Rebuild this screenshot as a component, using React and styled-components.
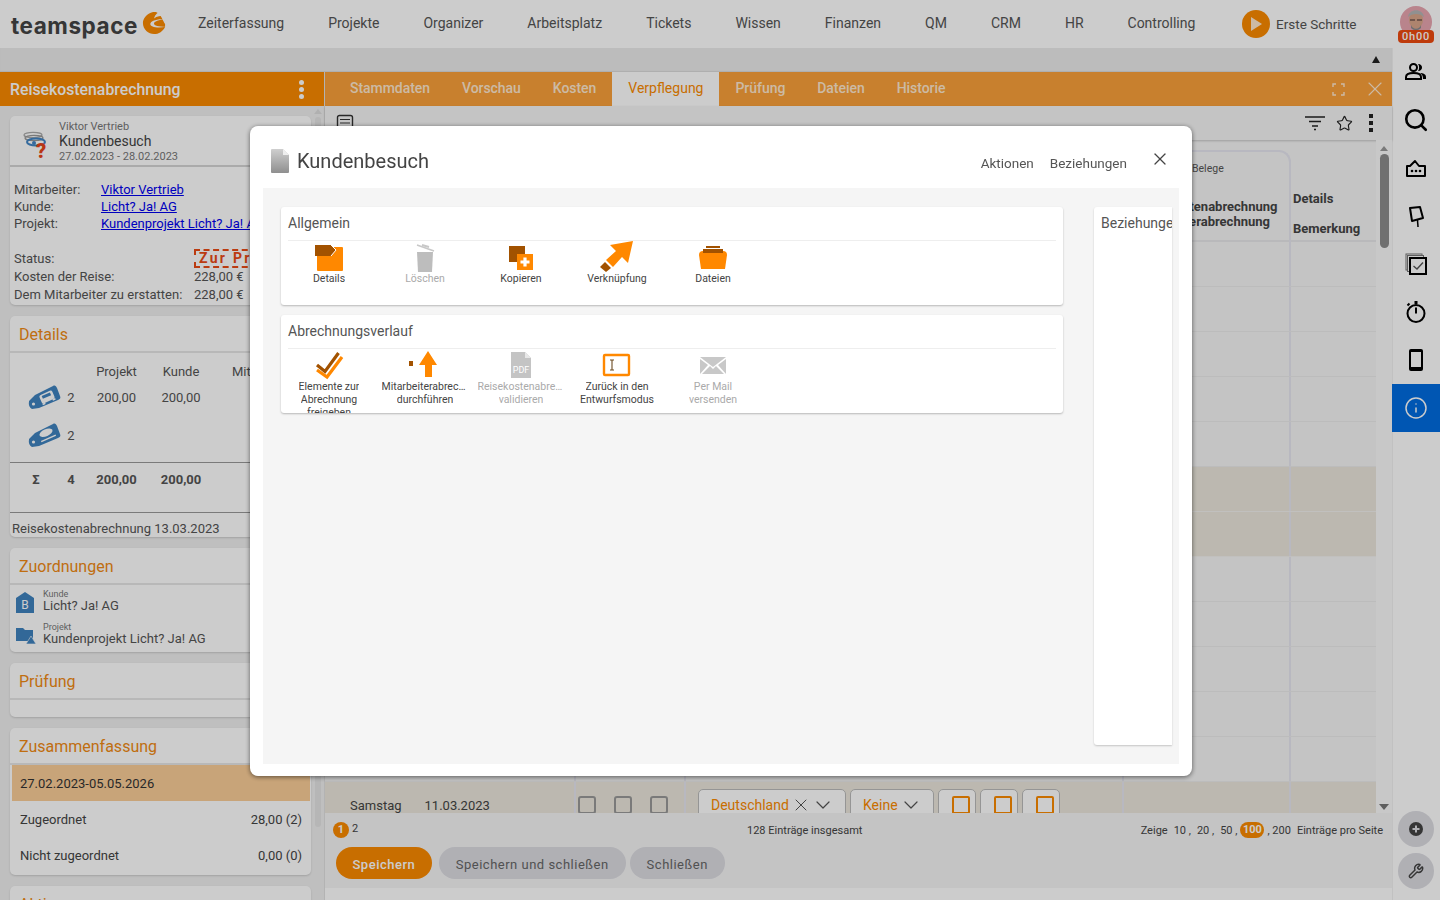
import React from "react";
import styled, { createGlobalStyle } from "styled-components";
import { Search, Star, Info, Wrench, X, ChevronDown } from "lucide-react";

const Global = createGlobalStyle`
  html, body { margin: 0; padding: 0; height: 900px; overflow: hidden; background: #fff; }
  * { box-sizing: border-box; }
  body { font-family: Roboto, "Liberation Sans", sans-serif; color: #444; }
  a { color: #0000ee; }
`;

const Page = styled.div`
  width: 1440px; height: 900px; display: flex; flex-direction: column; overflow: hidden;
`;
const Overlay = styled.div`
  position: fixed; inset: 0; background: rgba(0,0,0,.2);
`;

/* top bar */
const TopBar = styled.header`
  height: 48px; flex: none; display: flex; align-items: center; background: #fff;
`;
const Logo = styled.div`
  width: 176px; padding-left: 11px; display: flex; align-items: flex-start; flex: none; height: 48px;
  svg { margin: 11px 0 0 4px; }
`;
const LogoText = styled.span`
  font-family: Inter, sans-serif; font-weight: 700; font-size: 22.5px; letter-spacing: .55px; color: #444; margin-top: 12px; line-height: 27px;
`;
const Nav = styled.nav`
  display: flex; flex: none; width: 1034px;
`;
const NavItem = styled.span`
  font-size: 14px; line-height: 20px; padding: 0 22px; color: #555; margin-top: -2px;
`;
const FirstSteps = styled.div`
  display: flex; align-items: center; gap: 6px; width: 152px; padding-left: 32px; flex: none; font-size: 13.5px; color: #555; white-space: nowrap; margin-top: -1px;
`;
const Play = styled.span`
  width: 28px; height: 28px; flex: none; border-radius: 50%; background: #fb8a00; display: flex; align-items: center; justify-content: center;
`;
const AvatarWrap = styled.div`
  position: relative; width: 36px; height: 42px; margin-left: 36px; margin-top: 6px; flex: none;
  svg { display: block; margin-left: 2px; }
`;
const TimeBadge = styled.span`
  position: absolute; left: 0; top: 24px; width: 36px; height: 13px; border-radius: 4px; background: #ee4a10; color: #fff;
  font-size: 11px; line-height: 13px; font-weight: 500; text-align: center; letter-spacing: .8px;
`;

const Body = styled.div`
  flex: 1; display: flex; min-height: 0;
`;
const Content = styled.div`
  width: 1392px; flex: none; display: flex; flex-direction: column; min-height: 0;
`;
const Strip = styled.div`
  height: 24px; flex: none; background: #ececec; display: flex; justify-content: flex-end; align-items: center; padding: 0 12px 2px 0;
  box-shadow: inset 0 -1px 1px rgba(0,0,0,.08);
`;
const Panels = styled.div`
  flex: 1; display: flex; min-height: 0;
`;

/* left */
const Left = styled.aside`
  width: 325px; flex: none; display: flex; flex-direction: column; background: #efefef; min-height: 0;
  border-right: 1px solid #e0e0e0;
`;
const LeftHead = styled.div`
  height: 34px; flex: none; background: #fb8a00; color: #fff; display: flex; justify-content: space-between; align-items: center;
  padding: 0 20px 0 10px; font-size: 15.8px; font-weight: 500;
`;
const Dots = styled.span`
  display: flex; flex-direction: column; gap: ${p => p.$gap || 2}px; margin-left: ${p => p.$ml || 0}px;
  i { display: block; width: ${p => p.$s || 5}px; height: ${p => p.$s || 5}px; border-radius: ${p => p.$square ? 0 : "50%"}; background: ${p => p.$c || "#fff"}; }
`;
const LeftBody = styled.div`
  flex: 1; display: flex; min-height: 0; overflow: hidden;
`;
const CardCol = styled.div`
  width: 311px; flex: none; padding: 0 0 0 10px;
`;
const LeftScroll = styled.div`
  width: 13px; flex: none; display: flex; flex-direction: column; align-items: center; padding-top: 3px;
`;
const ArrowUp = styled.span`
  width: 0; height: 0; border-left: ${p => p.$w || 4}px solid transparent; border-right: ${p => p.$w || 4}px solid transparent; border-bottom: ${p => p.$h || 5}px solid ${p => p.$c || "#ddd"};
`;
const LeftThumb = styled.span`
  width: 6px; height: 710px; margin-top: 3px; border-radius: 3px; background: #e4e4e4;
`;
const Card = styled.section`
  height: ${p => p.$h}px; margin-top: ${p => p.$mt}px; background: #fff; border-radius: 5px; overflow: hidden;
  box-shadow: 0 1px 2px rgba(0,0,0,.15);
`;
const CardTitle = styled.h3`
  margin: 0; height: 37px; padding: 1px 0 0 9px; font-weight: 400; font-size: 16px; line-height: 36px; color: #f08a14; border-bottom: 2px solid #e6e6e6;
`;
const InfoHead = styled.div`
  height: 51px; display: flex; border-bottom: 2px solid #d5d5d5; padding: 4px 0 0 13px;
`;
const InfoIcon = styled.div`
  width: 36px; padding-top: 13px; flex: none;
  svg { display: block; overflow: visible; }
`;
const InfoText = styled.div`
  display: flex; flex-direction: column;
`;
const SmallGrey = styled.span`
  font-size: 11px; line-height: 13px; color: #777;
`;
const InfoName = styled.span`
  font-size: 14px; line-height: 17px; color: #444;
`;
const InfoRows = styled.div`
  padding: 14px 0 0 4px; font-size: 13px; color: #555;
`;
const InfoRow = styled.div`
  display: grid; grid-template-columns: ${p => p.$wide ? "180px" : "87px"} 1fr; line-height: 17px; white-space: nowrap; margin-top: ${p => p.$mt || 0}px;
  height: ${p => p.$h || 17.2}px; align-items: center;
`;
const StatusBox = styled.span`
  display: inline-block; height: 19px; padding: 0 3px; border: 2px dashed #ea4a14; color: #ea4a14; font-weight: 700; font-size: 14px; line-height: 15px; letter-spacing: 2.3px;
`;
const Sum = styled.div`
  font-size: 13px; color: #555; padding: 5px 0 0;
`;
const SumRow = styled.div`
  display: grid; grid-template-columns: 52px 18px 73px 56px 90px; height: ${p => p.$h}px; align-items: ${p => p.$top ? "start" : "center"}; text-align: center; white-space: nowrap;
  font-weight: ${p => p.$bold ? 700 : 400};
  border-top: ${p => p.$line ? "1px solid #999" : "0"};
  padding-top: ${p => p.$top || 0}px;
  margin-bottom: ${p => p.$mb || 0}px;
`;
const TagCell = styled.span`
  display: flex; justify-content: flex-end; align-items: center; margin-right: 1px;
`;
const MitHead = styled.span`
  text-align: left; padding-left: 23px;
`;
const Date13 = styled.div`
  border-top: 1px solid #999; font-size: 13px; padding: 8px 0 0 2px; color: #555; white-space: nowrap;
`;
const RelRow = styled.div`
  display: flex; height: 33px; padding: 4px 0 0 6px; gap: 8px;
`;
const RelIcon = styled.div`
  width: 19px; flex: none; padding-top: 3px;
`;
const RelText = styled.div`
  display: flex; flex-direction: column;
`;
const RelLabel = styled.span`
  font-size: 9px; line-height: 10px; color: #777;
`;
const RelValue = styled.span`
  font-size: 13px; line-height: 13px; color: #555;
`;
const SumHead = styled.div`
  height: 36px; margin: 0 1px 0 2px; padding-left: 8px; background: #fbce98; display: flex; align-items: center; font-size: 13px; color: #333;
`;
const KV = styled.div`
  height: 36px; display: flex; justify-content: space-between; align-items: center; padding: 0 9px 0 10px; font-size: 13px; color: #444;
`;

/* main */
const Main = styled.main`
  flex: 1; display: flex; flex-direction: column; min-width: 0; background: #f5f5f5;
`;
const Tabs = styled.div`
  height: 34px; flex: none; background: #faa03a; display: flex; align-items: stretch; padding-left: 9px; position: relative; color: #fff;
`;
const Tab = styled.span`
  padding: 0 16px; font-size: 14px; font-weight: ${p => p.$on ? 400 : 500}; line-height: 33px; letter-spacing: ${p => p.$on ? 0 : "-.05px"}; background: ${p => p.$on ? "#fff" : "transparent"}; color: ${p => p.$on ? "#fb8a00" : "#ffe9cf"};
`;
const TabTools = styled.div`
  margin-left: auto; display: flex; align-items: center; gap: 18px; padding-right: 5px;
`;
const Tool = styled.div`
  height: 34px; flex: none; display: flex; align-items: center; justify-content: space-between; padding: 0 19px 0 11px; background: #f5f5f5;
  box-shadow: 0 1px 2px rgba(0,0,0,.2); position: relative;
`;
const ToolRight = styled.div`
  display: flex; align-items: center;
  svg + svg { margin-left: 10px; }
`;
const Grid = styled.div`
  flex: 1; display: flex; min-height: 0;
`;
const TableArea = styled.div`
  width: 1051px; flex: none; overflow: hidden;
`;
const cols = "251px 110px 438px 167px 85px";
const HeadRow = styled.div`
  height: 102px; display: grid; grid-template-columns: ${cols}; border-bottom: 2px solid #e8e8ea;
`;
const BelegeCell = styled.div`
  margin-top: 10px; border-top: 2px solid #e6e6f0; border-right: 2px solid #e6e6f0; border-top-right-radius: 12px; padding: 10px 0 0 68px; font-size: 10.5px; color: #555; white-space: nowrap; overflow: hidden; height: 92px;
`;
const BoldLines = styled.div`
  margin: 24px 0 0 -56px; font-size: 13px; font-weight: 700; line-height: 15px; color: #444;
`;
const DetailCell = styled.div`
  padding: 51px 0 0 2px; font-size: 13px; font-weight: 700; color: #444; line-height: 16px;
`;
const Bem = styled.div`
  margin-top: 14px;
`;
const Row = styled.div`
  height: 45px; display: grid; grid-template-columns: ${cols}; background: ${p => p.$hl ? "#ebe7dc" : "#f5f5f5"}; border-bottom: 1px solid ${p => p.$hl ? "#f2f1ee" : "#ebebeb"};
`;
const Cell = styled.div`
  border-right: ${p => p.$last ? 0 : "2px solid #e6e6f0"}; display: flex; align-items: ${p => p.$top ? "flex-start" : "center"}; font-size: 13px; color: #444; gap: ${p => p.$gap || 0}px; padding: ${p => p.$pt || 0}px 0 0 ${p => p.$pl || 0}px; white-space: nowrap;
`;
const Check = styled.span`
  width: 18px; height: 18px; flex: none; border: 2px solid #999; border-radius: 3px; margin-top: 2px;
`;
const Combo = styled.div`
  height: 36px; flex: none; width: ${p => p.$w}px; margin: 7px 0 0 4px; background: #fff; border: 1px solid #bbb; border-radius: 5px 5px 0 0; display: flex; align-items: center; padding: 0 10px 4px 12px; color: #fb8a00; font-size: 14px;
  > span { margin-right: auto; }
`;
const SquareBtn = styled.div`
  width: 38px; height: 36px; flex: none; margin: 7px 0 0 4px; background: #fff; border: 1px solid #bbb; border-radius: 5px 5px 0 0; padding: 6px 0 0 13px;
  i { display: block; width: 18px; height: 18px; border: 2px solid #fb8a00; border-radius: 2px; }
`;
const VScroll = styled.div`
  width: 16px; flex: none; background: #fafafa; display: flex; flex-direction: column; align-items: center; padding-top: 6px; position: relative;
`;
const VThumb = styled.span`
  width: 9px; height: 94px; margin-top: 3px; background: #8c8c8c; border-radius: 5px;
`;
const ArrowDown = styled.span`
  margin-top: auto; margin-bottom: 3px; width: 0; height: 0; border-left: 5px solid transparent; border-right: 5px solid transparent; border-top: 6px solid #777;
`;
const Footer = styled.div`
  height: 75px; flex: none; background: #f5f5f5; position: relative; padding: 9px 9px 0 8px; display: flex; flex-direction: column; gap: 9px;
`;
const PagerRow = styled.div`
  height: 16px; display: grid; grid-template-columns: 414px 115px 1fr; align-items: center; font-size: 11px; color: #444;
`;
const PageNums = styled.div`
  display: flex; gap: 3px; align-items: flex-start; font-size: 11px;
`;
const Bubble = styled.span`
  min-width: ${p => p.$w || 16}px; height: 16px; margin: 0 ${p => p.$mx || 0}px; border-radius: 8px; background: #fb8a00; color: #fff; font-size: 11px; line-height: 16px; font-weight: 700; text-align: center; display: inline-block;
`;
const Center = styled.div`
  text-align: center; white-space: nowrap; margin-top: 1px;
`;
const PerPage = styled.div`
  display: flex; justify-content: flex-end; gap: 6px; align-items: center; white-space: nowrap;
`;
const Btns = styled.div`
  display: flex; padding-left: 3px;
`;
const Btn = styled.button`
  height: 32px; border: 0; border-radius: 16px; padding: 2px ${p => p.$primary ? 16.5 : 17}px 0; margin-left: ${p => p.$ml || 0}px; font: ${p => p.$primary ? 500 : 400} 13px Roboto, sans-serif; letter-spacing: .5px;
  background: ${p => p.$primary ? "#fb8a00" : "#dcdce2"}; color: ${p => p.$primary ? "#fff" : "#666"};
`;
const BottomGap = styled.div`
  height: 12px; flex: none; background: #fff;
`;

/* right */
const Side = styled.aside`
  width: 48px; flex: none; background: #fff; display: flex; flex-direction: column; box-shadow: inset 1px 0 0 #f2f2f2;
`;
const SideBtn = styled.div`
  height: 48px; flex: none; display: flex; align-items: center; justify-content: center; background: ${p => p.$on ? "#006ce0" : "transparent"}; color: #000;
`;
const CircleBtns = styled.div`
  margin-top: auto; display: flex; flex-direction: column; gap: 6px; align-items: center; padding-bottom: 11px;
`;
const CircleBtn = styled.div`
  width: 36px; height: 36px; border-radius: 50%; background: #dcdce2; display: flex; align-items: center; justify-content: center; color: #444;
`;

/* modal */
const Modal = styled.div`
  position: fixed; left: 250px; top: 126px; width: 942px; height: 650px; background: #fff; border-radius: 8px; box-shadow: 0 1px 5px rgba(0,0,0,.55);
  display: flex; flex-direction: column;
`;
const ModalHead = styled.div`
  height: 62px; flex: none; display: flex; align-items: flex-start; padding: 23px 0 0 21px; position: relative;
`;
const ModalTitle = styled.h2`
  margin: 0 0 0 7px; font-weight: 400; font-size: 20px; line-height: 24px; color: #444;
`;
const ModalLinks = styled.div`
  margin-left: auto; display: flex; gap: 16px; font-size: 13.5px; color: #555; padding-top: 6px; margin-right: 65px; line-height: 17px;
`;
const CloseBtn = styled.span`
  position: absolute; right: 22px; top: 23px; color: #444; display: flex;
`;
const ModalBody = styled.div`
  flex: 1; margin: 0 13px 12px; background: #f5f5f5; display: flex; padding: 19px 0 0 18px; min-height: 0;
`;
const Cards = styled.div`
  width: 782px; flex: none; display: flex; flex-direction: column; gap: 10px;
`;
const MCard = styled.div`
  height: 98px; background: #fff; border-radius: 3px; box-shadow: 0 1px 2px rgba(0,0,0,.25); overflow: hidden; padding: 0;
`;
const MTitle = styled.div`
  margin: 0 7px; height: 34px; border-bottom: 1px solid #eee; font-size: 14px; line-height: 32px; color: #555;
`;
const Items = styled.div`
  display: flex;
`;
const Item = styled.div`
  width: 96px; flex: none; display: flex; flex-direction: column; align-items: center; font-size: 10.5px; line-height: 13px; color: ${p => p.$off ? "#aaa" : "#444"}; text-align: center;
  svg { display: block; height: 31px; }
`;
const ItemLine = styled.span`
  max-width: 87px; white-space: nowrap; overflow: hidden; text-overflow: ellipsis; display: block;
`;
const RelCard = styled.div`
  width: 78px; height: 538px; flex: none; margin-left: 31px; background: #fff; box-shadow: 0 1px 2px rgba(0,0,0,.2); overflow: hidden; border-radius: 3px 0 0 3px;
  font-size: 14px; line-height: 32px; color: #555; white-space: nowrap; padding-left: 7px;
`;

const Dot3 = () => <Dots><i /><i /><i /></Dots>;

const Tag = ({ kind }) => (
  <svg width="33" height="25" viewBox="0 0 33 25">
    <path d="M1 16 L7 10 L25 1 C27 0 28 1 29 3 L32 11 C33 13 32 14 30 15 L11 23 L4 24 Q0 22 1 16Z" fill="#3f83bf" />
    <circle cx="5.5" cy="19" r="1.6" fill="#fff" />
    {kind === "car" ? (
      <g transform="rotate(-24 19 12)">
        <rect x="12" y="7.5" width="14" height="9" rx="2" fill="#fff" />
        <rect x="14.5" y="9" width="9" height="3" fill="#3f83bf" />
        <path d="M12 17 h3 M23 17 h3" stroke="#fff" strokeWidth="1.6" />
      </g>
    ) : (
      <g transform="rotate(-24 19 12)">
        <ellipse cx="19" cy="9.5" rx="7" ry="3.5" fill="#fff" />
        <rect x="11" y="15" width="16" height="1.4" fill="#fff" />
      </g>
    )}
  </svg>
);

const catalog = [
  { label: ["Details"], icon: (
    <svg width="40" height="31" viewBox="0 0 40 31"><rect x="8" y="6" width="26" height="24" rx="1" fill="#ff8800" /><path d="M6 4 H22 L27 9 L22 15 H6Z" fill="#a25200" /><path d="M22 4 L27 9 L22 15" fill="none" stroke="#fff" strokeWidth="1" /></svg>
  )},
  { label: ["Löschen"], off: true, icon: (
    <svg width="40" height="31" viewBox="0 0 40 31"><path d="M12 11 H28 L27 31 H13Z" fill="#bdbdbd" /><path d="M12 4 L29 10" stroke="#c8c8c8" strokeWidth="1.6" /><path d="M17 4 L24 6" stroke="#c8c8c8" strokeWidth="2" /></svg>
  )},
  { label: ["Kopieren"], icon: (
    <svg width="40" height="31" viewBox="0 0 40 31"><rect x="8" y="5" width="16" height="16" fill="#a25200" /><rect x="16" y="13" width="16" height="16" fill="#ff8800" /><path d="M19.5 21 h9 M24 16.5 v9" stroke="#fff" strokeWidth="3.2" /></svg>
  )},
  { label: ["Verknüpfung"], icon: (
    <svg width="40" height="31" viewBox="0 0 40 31"><path d="M36 0 L13 4 L19 10 L9 19 L16 26 L25 16 L31 22Z" fill="#ff8800" /><path d="M8 21 L14 27 L9 31 L3 26Z" fill="#a25200" /></svg>
  )},
  { label: ["Dateien"], icon: (
    <svg width="40" height="31" viewBox="0 0 40 31"><path d="M6 14 Q6 10 10 10 H30 Q34 10 34 14 L32 28 H8Z" fill="#ff8800" /><rect x="10" y="8" width="20" height="4" fill="#a25200" /><rect x="13" y="5" width="14" height="2" fill="#a25200" /></svg>
  )},
];
const flow = [
  { label: ["Elemente zur", "Abrechnung", "freigeben"], icon: (
    <svg width="40" height="31" viewBox="0 0 40 31"><path d="M8 21 L18 28 L33 8" fill="none" stroke="#ff8800" strokeWidth="3.2" /><path d="M8 16 L16 22.5 L29.5 4" fill="none" stroke="#a25200" strokeWidth="3.2" /></svg>
  )},
  { label: ["Mitarbeiterabrechnung", "durchführen"], icon: (
    <svg width="40" height="31" viewBox="0 0 40 31"><rect x="4" y="12" width="4" height="5" fill="#a25200" /><path d="M23 2 L32 16 L27 16 L27 28 L20 28 L20 16 L14 16Z" fill="#ff8800" /></svg>
  )},
  { label: ["Reisekostenabrechnung", "validieren"], off: true, icon: (
    <svg width="40" height="31" viewBox="0 0 40 31"><path d="M10 3 H24 L30 9 V29 H10Z" fill="#c4c4c4" /><path d="M24 3 L30 9 H24Z" fill="#e8e8e8" /><text x="20" y="24" textAnchor="middle" fontSize="9" fill="#fff" fontFamily="Roboto">PDF</text></svg>
  )},
  { label: ["Zurück in den", "Entwurfsmodus"], icon: (
    <svg width="40" height="31" viewBox="0 0 40 31"><rect x="7" y="6" width="25" height="20" rx="1" fill="#fff" stroke="#ff8800" strokeWidth="2.4" /><path d="M13 11 h4 M13 21 h4 M15 11 v10" stroke="#6b4a20" strokeWidth="1.1" fill="none" /></svg>
  )},
  { label: ["Per Mail", "versenden"], off: true, icon: (
    <svg width="40" height="31" viewBox="0 0 40 31"><path d="M7 8 H33 L20 18Z" fill="#c8c8c8" /><path d="M7 10 L15 16 L7 25Z M33 10 L25 16 L33 25Z M9 25 L17 17 L20 20 L23 17 L31 25Z" fill="#c8c8c8" /></svg>
  )},
];

const Actions = ({ list }) => (
  <Items>
    {list.map((it, i) => (
      <Item key={i} $off={it.off}>
        {it.icon}
        {it.label.map(l => <ItemLine key={l}>{l}</ItemLine>)}
      </Item>
    ))}
  </Items>
);

const rows = Array.from({ length: 13 }, (_, i) => i);

export default function App() {
  return (
    <Page>
      <Global />
      <TopBar>
        <Logo>
          <LogoText>teamspace</LogoText>
          <svg width="24" height="24" viewBox="0 0 26 26">
            <path d="M12 1 C5 3 1 8 1 13 C1 20 7 25 13 25 C18 25 23 22 25 17 L25 14 C23 12 21 3 15 1Z" fill="#fb8a00" />
            <path d="M26 9 C15 8 9 11 9 14 C9 17 16 19 26 17 C18 17 13 16 13 13.5 C13 11.5 18 9.5 26 9Z" fill="#fff" />
            <path d="M21 0 C17 1 14 4 13 8 C16 6 20 5 26 5 L26 0Z" fill="#fff" />
          </svg>
        </Logo>
        <Nav>
          {["Zeiterfassung", "Projekte", "Organizer", "Arbeitsplatz", "Tickets", "Wissen", "Finanzen", "QM", "CRM", "HR", "Controlling"].map(n => <NavItem key={n}>{n}</NavItem>)}
        </Nav>
        <FirstSteps>
          <Play><svg width="14" height="16" viewBox="0 0 14 16"><path d="M2 1 L13 8 L2 15Z" fill="#ffe9cf" /></svg></Play>
          Erste Schritte
        </FirstSteps>
        <AvatarWrap>
          <svg width="32" height="32" viewBox="0 0 32 32">
            <clipPath id="av"><circle cx="16" cy="16" r="16" /></clipPath>
            <g clipPath="url(#av)">
              <rect width="32" height="32" fill="#e8a5b0" />
              <path d="M0 32 L10 25 H22 L32 32Z" fill="#f03a30" />
              <ellipse cx="16" cy="14" rx="7" ry="9" fill="#d9a58a" />
              <path d="M8 11 C9 2 23 2 24 11 C20 7 12 7 8 11Z" fill="#b5b5b5" />
              <path d="M10 14 h5 M17 14 h5" stroke="#433" strokeWidth="1.2" />
              <path d="M11 19 C13 24 19 24 21 19 L21 22 C18 25 14 25 11 22Z" fill="#8b8b8b" />
            </g>
          </svg>
          <TimeBadge>0h00</TimeBadge>
        </AvatarWrap>
      </TopBar>
      <Body>
        <Content>
          <Strip><ArrowUp $c="#222" $h={7} /></Strip>
          <Panels>
            <Left>
              <LeftHead>Reisekostenabrechnung<Dot3 /></LeftHead>
              <LeftBody>
                <CardCol>
                  <Card $h={189} $mt={10}>
                    <InfoHead>
                      <InfoIcon>
                        <svg width="26" height="26" viewBox="0 0 26 26">
                          <ellipse cx="10" cy="2" rx="9" ry="2.6" fill="none" stroke="#aaa" strokeWidth="1.3" />
                          <ellipse cx="11" cy="5" rx="9" ry="2.6" fill="none" stroke="#999" strokeWidth="1.3" />
                          <ellipse cx="13" cy="9" rx="9" ry="3.5" fill="none" stroke="#4285c5" strokeWidth="2" />
                          <circle cx="11" cy="10" r="2" fill="#4285c5" />
                          <text x="13" y="25" fontSize="20" fontWeight="900" fill="#e8441a" fontFamily="Roboto">?</text>
                        </svg>
                      </InfoIcon>
                      <InfoText>
                        <SmallGrey>Viktor Vertrieb</SmallGrey>
                        <InfoName>Kundenbesuch</InfoName>
                        <SmallGrey>27.02.2023 - 28.02.2023</SmallGrey>
                      </InfoText>
                    </InfoHead>
                    <InfoRows>
                      <InfoRow><span>Mitarbeiter:</span><a href="#a">Viktor Vertrieb</a></InfoRow>
                      <InfoRow><span>Kunde:</span><a href="#b">Licht? Ja! AG</a></InfoRow>
                      <InfoRow><span>Projekt:</span><a href="#c">Kundenprojekt Licht? Ja! AG</a></InfoRow>
                      <InfoRow $wide $mt={16} $h={19}><span>Status:</span><span><StatusBox>Zur Prüfung</StatusBox></span></InfoRow>
                      <InfoRow $wide $h={18}><span>Kosten der Reise:</span><span>228,00 €</span></InfoRow>
                      <InfoRow $wide $h={16}><span>Dem Mitarbeiter zu erstatten:</span><span>228,00 €</span></InfoRow>
                    </InfoRows>
                  </Card>
                  <Card $h={221} $mt={11}>
                    <CardTitle>Details</CardTitle>
                    <Sum>
                      <SumRow $h={26}><span /><span /><span>Projekt</span><span>Kunde</span><MitHead>Mitarbeiter</MitHead></SumRow>
                      <SumRow $h={27}><TagCell><Tag kind="car" /></TagCell><span>2</span><span>200,00</span><span>200,00</span><span /></SumRow>
                      <SumRow $h={48} $mb={3}><TagCell><Tag kind="food" /></TagCell><span>2</span><span /><span /><span /></SumRow>
                      <SumRow $h={50} $line $bold $top={9}><span>Σ</span><span>4</span><span>200,00</span><span>200,00</span><span /></SumRow>
                      <Date13>Reisekostenabrechnung 13.03.2023</Date13>
                    </Sum>
                  </Card>
                  <Card $h={104} $mt={11}>
                    <CardTitle>Zuordnungen</CardTitle>
                    <RelRow>
                      <RelIcon><svg width="18" height="21" viewBox="0 0 18 21"><path d="M0 6 L9 0 L18 6 V21 H0Z" fill="#3f83bf" /><text x="9" y="16.5" textAnchor="middle" fontSize="12" fill="#fff" fontFamily="Roboto">B</text></svg></RelIcon>
                      <RelText><RelLabel>Kunde</RelLabel><RelValue>Licht? Ja! AG</RelValue></RelText>
                    </RelRow>
                    <RelRow>
                      <RelIcon><svg width="20" height="20" viewBox="0 0 20 20"><path d="M0 3 H7 L9 5 H17 V16 H0Z" fill="#3f83bf" /><path d="M15 11 L20 19 H10Z" fill="#3f83bf" stroke="#fff" strokeWidth=".6" /></svg></RelIcon>
                      <RelText><RelLabel>Projekt</RelLabel><RelValue>Kundenprojekt Licht? Ja! AG</RelValue></RelText>
                    </RelRow>
                  </Card>
                  <Card $h={54} $mt={11}><CardTitle>Prüfung</CardTitle></Card>
                  <Card $h={147} $mt={11}>
                    <CardTitle>Zusammenfassung</CardTitle>
                    <SumHead>27.02.2023-05.05.2026</SumHead>
                    <KV><span>Zugeordnet</span><span>28,00 (2)</span></KV>
                    <KV><span>Nicht zugeordnet</span><span>0,00 (0)</span></KV>
                  </Card>
                  <Card $h={60} $mt={11}><CardTitle>Aktionen</CardTitle></Card>
                </CardCol>
                <LeftScroll><ArrowUp /><LeftThumb /></LeftScroll>
              </LeftBody>
            </Left>
            <Main>
              <Tabs>
                {["Stammdaten", "Vorschau", "Kosten"].map(t => <Tab key={t}>{t}</Tab>)}
                <Tab $on>Verpflegung</Tab>
                {["Prüfung", "Dateien", "Historie"].map(t => <Tab key={t}>{t}</Tab>)}
                <TabTools>
                  <svg width="13" height="13" viewBox="0 0 13 13"><path d="M1 4 V1 H4 M9 1 H12 V4 M12 9 V12 H9 M4 12 H1 V9" fill="none" stroke="#ffe9cf" strokeWidth="1.4" /></svg>
                  <X size={24} color="#ffe9cf" strokeWidth={1.1} />
                </TabTools>
              </Tabs>
              <Tool>
                <svg width="18" height="18" viewBox="0 0 18 18"><rect x="1.5" y="1.5" width="15" height="15" rx="2" fill="none" stroke="#333" strokeWidth="1.4" /><path d="M4 5.5 h10 M4 9 h10 M4 12.5 h10" stroke="#333" strokeWidth="1.2" /></svg>
                <ToolRight>
                  <svg width="22" height="16" viewBox="0 0 22 16"><path d="M1 2 h20 M5 6.5 h12 M8 11 h6 M10 14.5 h2" stroke="#222" strokeWidth="1.6" /></svg>
                  <Star size={17} color="#222" strokeWidth={1.6} />
                  <Dots $square $s={4} $c="#222" $gap={3} $ml={16}><i /><i /><i /></Dots>
                </ToolRight>
              </Tool>
              <Grid>
                <TableArea>
                  <HeadRow>
                    <Cell />
                    <Cell />
                    <Cell />
                    <BelegeCell>
                      Belege
                      <BoldLines>Reisekostenabrechnung<br />Mitarbeiterabrechnung</BoldLines>
                    </BelegeCell>
                    <DetailCell>Details<Bem>Bemerkung</Bem></DetailCell>
                  </HeadRow>
                  {rows.map(i => i < 12 ? (
                    <Row key={i} $hl={i === 5 || i === 6}>
                      <Cell /><Cell /><Cell /><Cell /><Cell $last />
                    </Row>
                  ) : (
                    <Row key={i} $hl>
                      <Cell $pl={25} $pt={2} $gap={23}><span>Samstag</span><span>11.03.2023</span></Cell>
                      <Cell $pl={2} $gap={18}><Check /><Check /><Check /></Cell>
                      <Cell $pl={8} $top>
                        <Combo $w={148}><span>Deutschland</span><X size={20} color="#555" strokeWidth={1.2} /><ChevronDown size={24} color="#555" strokeWidth={1.2} /></Combo>
                        <Combo $w={84}><span>Keine</span><ChevronDown size={24} color="#555" strokeWidth={1.2} /></Combo>
                        <SquareBtn><i /></SquareBtn><SquareBtn><i /></SquareBtn><SquareBtn><i /></SquareBtn>
                      </Cell>
                      <Cell /><Cell $last />
                    </Row>
                  ))}
                </TableArea>
                <VScroll><ArrowUp $c="#999" /><VThumb /><ArrowDown /></VScroll>
              </Grid>
              <Footer>
                <PagerRow>
                  <PageNums><Bubble>1</Bubble><span>2</span></PageNums>
                  <Center>128 Einträge insgesamt</Center>
                  <PerPage>
                    <span>Zeige</span>
                    <span>10 ,</span><span>20 ,</span><span>50 ,</span>
                    <Bubble $w={24} $mx={-3}>100</Bubble>
                    <span>, 200</span>
                    <span>Einträge pro Seite</span>
                  </PerPage>
                </PagerRow>
                <Btns>
                  <Btn $primary>Speichern</Btn>
                  <Btn $ml={7}>Speichern und schließen</Btn>
                  <Btn $ml={4}>Schließen</Btn>
                </Btns>
              </Footer>
              <BottomGap />
            </Main>
          </Panels>
        </Content>
        <Side>
          <SideBtn>
            <svg width="24" height="24" viewBox="0 0 24 24"><circle cx="9.5" cy="7.5" r="3.5" fill="none" stroke="#000" strokeWidth="2" /><path d="M2 19 V17 C2 14 6 13 9.5 13 C13 13 17 14 17 17 V19Z" fill="none" stroke="#000" strokeWidth="2" /><path d="M14 4 C17 4 18 6 18 7.5 C18 9 17 11 14 11 C15.5 9.5 15.5 5.5 14 4Z M16 13 C19 13 22 14 22 17 V19 H19 C19 16 18 14 16 13Z" fill="#000" /></svg>
          </SideBtn>
          <SideBtn><Search size={26} color="#000" strokeWidth={2.4} /></SideBtn>
          <SideBtn>
            <svg width="24" height="24" viewBox="0 0 24 24"><path d="M3 20 V10 H6 L11 5 L15 10 H21 V20Z" fill="none" stroke="#000" strokeWidth="2" strokeLinejoin="round" /><circle cx="8" cy="15" r="1.3" /><circle cx="12" cy="15" r="1.3" /><circle cx="16" cy="15" r="1.3" /></svg>
          </SideBtn>
          <SideBtn>
            <svg width="24" height="24" viewBox="0 0 24 24"><path d="M6 4 L16 3 L19 14 L8 17Z" fill="none" stroke="#000" strokeWidth="2" strokeLinejoin="round" /><path d="M13.5 16 L14 23" stroke="#000" strokeWidth="1.5" /></svg>
          </SideBtn>
          <SideBtn>
            <svg width="24" height="24" viewBox="0 0 24 24"><rect x="2" y="2" width="16" height="16" fill="none" stroke="#777" strokeWidth="1" /><rect x="3.5" y="3.5" width="16" height="16" fill="#fff" stroke="#777" strokeWidth="1" /><rect x="6" y="6" width="16" height="16" fill="#fff" stroke="#000" strokeWidth="2" /><path d="M9.5 14 L13 17 L19 10.5" fill="none" stroke="#555" strokeWidth="1.4" /></svg>
          </SideBtn>
          <SideBtn>
            <svg width="24" height="24" viewBox="0 0 24 24"><circle cx="12" cy="13.5" r="8.5" fill="none" stroke="#000" strokeWidth="2" /><path d="M12 7.5 V13.5" stroke="#000" strokeWidth="2" /><rect x="10.5" y="1" width="3" height="3" /><path d="M3.5 5.5 L5.5 3.5" stroke="#000" strokeWidth="2" /></svg>
          </SideBtn>
          <SideBtn>
            <svg width="24" height="24" viewBox="0 0 24 24"><rect x="5" y="1" width="14" height="22" rx="2" fill="#000" /><rect x="7" y="4" width="10" height="15" fill="#fff" /></svg>
          </SideBtn>
          <SideBtn $on><Info size={24} color="#fff" strokeWidth={1.5} /></SideBtn>
          <CircleBtns>
            <CircleBtn>
              <svg width="14" height="14" viewBox="0 0 14 14"><circle cx="7" cy="7" r="7" fill="#444" /><path d="M7 3.5 v7 M3.5 7 h7" stroke="#dcdce2" strokeWidth="2" /></svg>
            </CircleBtn>
            <CircleBtn><Wrench size={16} color="#444" strokeWidth={2.2} /></CircleBtn>
          </CircleBtns>
        </Side>
      </Body>
      <Overlay />
      <Modal>
        <ModalHead>
          <svg width="19" height="24" viewBox="0 0 19 24">
            <defs><linearGradient id="docg" x1="0" y1="0" x2="0" y2="1"><stop offset="0" stopColor="#cfcfcf" /><stop offset="1" stopColor="#8f8f8f" /></linearGradient></defs>
            <path d="M1 0 H12 L18 6 V23 Q18 24 17 24 H1 Q0 24 0 23 V1 Q0 0 1 0Z" fill="url(#docg)" />
            <path d="M12 0 L18 6 H12Z" fill="#eee" />
          </svg>
          <ModalTitle>Kundenbesuch</ModalTitle>
          <ModalLinks><span>Aktionen</span><span>Beziehungen</span></ModalLinks>
          <CloseBtn><X size={20} strokeWidth={1.5} /></CloseBtn>
        </ModalHead>
        <ModalBody>
          <Cards>
            <MCard><MTitle>Allgemein</MTitle><Actions list={catalog} /></MCard>
            <MCard><MTitle>Abrechnungsverlauf</MTitle><Actions list={flow} /></MCard>
          </Cards>
          <RelCard>Beziehungen</RelCard>
        </ModalBody>
      </Modal>
    </Page>
  );
}
